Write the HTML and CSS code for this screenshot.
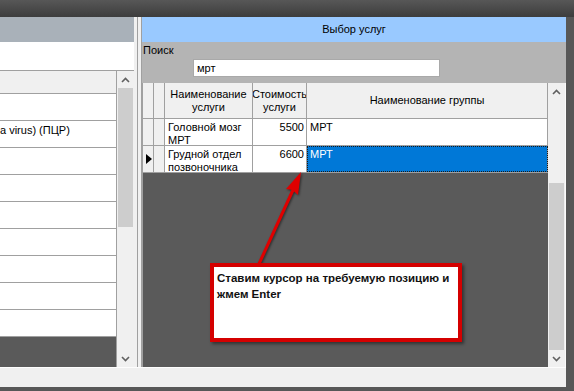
FILE: index.html
```html
<!DOCTYPE html>
<html lang="ru">
<head>
    <meta charset="UTF-8">
    <meta name="viewport" content="width=device-width, initial-scale=1.0">
    <title>Выбор услуг</title>
    <link rel="stylesheet" href="styles.css">
</head>
<body>
    <div class="titlebar"></div>
    <div class="window">
        <div class="main">
            <div class="left-panel">
                <div class="left-caption"></div>
                <div class="left-filter"></div>
                <div class="left-table">
                    <div class="left-grid">
                        <div class="left-head"></div>
                        <div class="left-row"></div>
                        <div class="left-row">a virus) (ПЦР)</div>
                        <div class="left-row"></div>
                        <div class="left-row"></div>
                        <div class="left-row"></div>
                        <div class="left-row"></div>
                        <div class="left-row"></div>
                        <div class="left-row"></div>
                        <div class="left-row"></div>
                        <div class="grid-empty"></div>
                    </div>
                    <div class="scrollbar">
                        <div class="scroll-btn">
                            <svg width="9" height="6" viewBox="0 0 9 6"><polyline points="1,5 4.5,1.5 8,5" class="chevron"/></svg>
                        </div>
                        <div class="scroll-thumb left-thumb"></div>
                        <div class="scroll-track"></div>
                        <div class="scroll-btn">
                            <svg width="9" height="6" viewBox="0 0 9 6"><polyline points="1,1 4.5,4.5 8,1" class="chevron"/></svg>
                        </div>
                    </div>
                </div>
            </div>

            <div class="splitter"></div>

            <div class="right-panel">
                <div class="caption">Выбор услуг</div>
                <div class="search">
                    <div class="search-label">Поиск</div>
                    <div class="search-input">мрт</div>
                </div>
                <div class="services">
                    <div class="services-grid">
                        <div class="row head">
                            <div class="cell ind"></div>
                            <div class="cell ind"></div>
                            <div class="cell name"><span>Наименование<br>услуги</span></div>
                            <div class="cell cost"><span>Стоимость<br>услуги</span></div>
                            <div class="cell group"><span>Наименование группы</span></div>
                        </div>
                        <div class="row">
                            <div class="cell ind"></div>
                            <div class="cell ind"></div>
                            <div class="cell name">Головной мозг МРТ</div>
                            <div class="cell cost">5500</div>
                            <div class="cell group">МРТ</div>
                        </div>
                        <div class="row">
                            <div class="cell ind">
                                <svg width="7" height="10" viewBox="0 0 7 10"><polygon points="1,0 7,5 1,10" fill="#000"/></svg>
                            </div>
                            <div class="cell ind"></div>
                            <div class="cell name">Грудной отдел позвоночника</div>
                            <div class="cell cost">6600</div>
                            <div class="cell group selected">МРТ</div>
                        </div>
                        <div class="grid-empty"></div>
                    </div>
                    <div class="scrollbar">
                        <div class="scroll-btn">
                            <svg width="9" height="6" viewBox="0 0 9 6"><polyline points="1,5 4.5,1.5 8,5" class="chevron"/></svg>
                        </div>
                        <div class="scroll-track right-track"></div>
                        <div class="scroll-thumb right-thumb"></div>
                        <div class="scroll-btn">
                            <svg width="9" height="6" viewBox="0 0 9 6"><polyline points="1,1 4.5,4.5 8,1" class="chevron"/></svg>
                        </div>
                    </div>
                    <div class="services-edge"></div>
                </div>
            </div>
        </div>
        <div class="statusbar"></div>
    </div>

    <!-- red note drawn over the screenshot -->
    <svg class="pointer" width="574" height="391" viewBox="0 0 574 391">
        <line x1="258" y1="266" x2="293" y2="190" stroke="#e00000" stroke-width="3"/>
        <polygon points="301,172 298,195 292.5,190 286,189" fill="#e00000"/>
    </svg>
    <div class="hint">Ставим курсор на требуемую позицию и жмем Enter</div>
</body>
</html>
```

FILE: styles.css
```css
body {
    font-family: "Liberation Sans", Arial, sans-serif;
    font-size: 11px;
    color: #000;
    margin: 0;
    width: 574px;
    height: 391px;
    overflow: hidden;
    background-color: #575757;
    position: relative;
}

.titlebar {
    height: 17px;
    background: linear-gradient(#575757, #3d3d3d);
}

.window {
    width: 566px;
}

.main {
    display: flex;
    height: 350px;
}

/* left list */

.left-panel {
    width: 134px;
    display: flex;
    flex-direction: column;
}

.left-caption {
    height: 25px;
    background-color: #a9b1b9;
}

.left-filter {
    height: 29px;
    box-sizing: border-box;
    background-color: #fff;
    border-bottom: 1px solid #a0a0a0;
}

.left-table {
    flex: 1;
    display: flex;
}

.left-grid {
    width: 117px;
    box-sizing: border-box;
    border-right: 1px solid #a0a0a0;
    display: flex;
    flex-direction: column;
}

.left-head {
    height: 23px;
    box-sizing: border-box;
    background-color: #f0f0f0;
    border-bottom: 1px solid #a0a0a0;
}

.left-row {
    height: 27px;
    box-sizing: border-box;
    background-color: #fff;
    border-bottom: 1px solid #a0a0a0;
    padding-top: 3px;
    line-height: 13px;
    white-space: nowrap;
    overflow: hidden;
}

.grid-empty {
    flex: 1;
    background-color: #5a5a5a;
}

/* scrollbars */

.scrollbar {
    width: 17px;
    background-color: #f0f0f0;
    display: flex;
    flex-direction: column;
}

.scroll-btn {
    height: 17px;
    display: flex;
    align-items: center;
    justify-content: center;
}

.chevron {
    fill: none;
    stroke: #606060;
    stroke-width: 1.6;
}

.scroll-thumb {
    background-color: #cdcdcd;
    margin: 0 1px;
}

.scroll-track {
    flex: 1;
}

.left-thumb {
    height: 139px;
}

.right-track {
    flex: none;
    height: 83px;
}

.right-thumb {
    flex: 1;
}

.splitter {
    width: 8px;
    background: linear-gradient(to right, #f0f0f0 0 3px, #a0a0a0 3px 4px, #f0f0f0 4px 7px, #a0a0a0 7px 8px);
}

/* services panel */

.right-panel {
    width: 424px;
    display: flex;
    flex-direction: column;
}

.caption {
    height: 25px;
    line-height: 25px;
    text-align: center;
    background-color: #99c9ff;
}

.search {
    height: 41px;
    box-sizing: border-box;
    background-color: #b4b4b4;
    padding-top: 1px;
}

.search-label {
    line-height: 14px;
    padding-left: 1px;
}

.search-input {
    width: 247px;
    height: 18px;
    box-sizing: border-box;
    margin: 2px 0 0 51px;
    padding-left: 3px;
    line-height: 16px;
    background-color: #fff;
    border: 1px solid #a9a9a9;
}

.services {
    flex: 1;
    display: flex;
}

.services-grid {
    width: 406px;
    box-sizing: border-box;
    border-left: 1px solid #a0a0a0;
    display: flex;
    flex-direction: column;
}

.services-edge {
    width: 1px;
    background-color: #fafafa;
}

.row {
    display: flex;
    height: 27px;
    box-sizing: border-box;
    border-bottom: 1px solid #a0a0a0;
}

.row.head {
    height: 36px;
    background-color: #f0f0f0;
}

.cell {
    box-sizing: border-box;
    border-right: 1px solid #a0a0a0;
    background-color: #fff;
    line-height: 13px;
    padding: 2px 2px 0 3px;
    overflow: hidden;
}

.cell.ind {
    width: 11px;
    padding: 0;
    background-color: #f0f0f0;
    display: flex;
    align-items: center;
    justify-content: center;
}

.cell.name {
    width: 88px;
}

.cell.cost {
    width: 54px;
    text-align: right;
}

.cell.group {
    width: 241px;
}

.head .cell {
    background-color: #f0f0f0;
    padding: 0;
    display: flex;
    align-items: center;
    justify-content: center;
    text-align: center;
    white-space: nowrap;
}

.cell.selected {
    background-color: #0078d7;
    color: #fff;
    outline: 1px dotted #1a1a1a;
    outline-offset: -1px;
}

.statusbar {
    height: 20px;
    box-sizing: border-box;
    background-color: #f0f0f0;
    border-top: 1px solid #fdfdfd;
}

/* note */

.pointer {
    position: absolute;
    left: 0;
    top: 0;
    filter: drop-shadow(1px 1px 1px rgba(0, 0, 0, 0.5));
}

.hint {
    position: absolute;
    left: 210px;
    top: 263px;
    width: 252px;
    height: 79px;
    box-sizing: border-box;
    border: 4px solid #d40000;
    background-color: #fff;
    padding: 3px 2px 0 3px;
    font-size: 11.5px;
    font-weight: bold;
    line-height: 16px;
    color: #111;
    box-shadow: 2px 2px 3px rgba(0, 0, 0, 0.45);
}
```
